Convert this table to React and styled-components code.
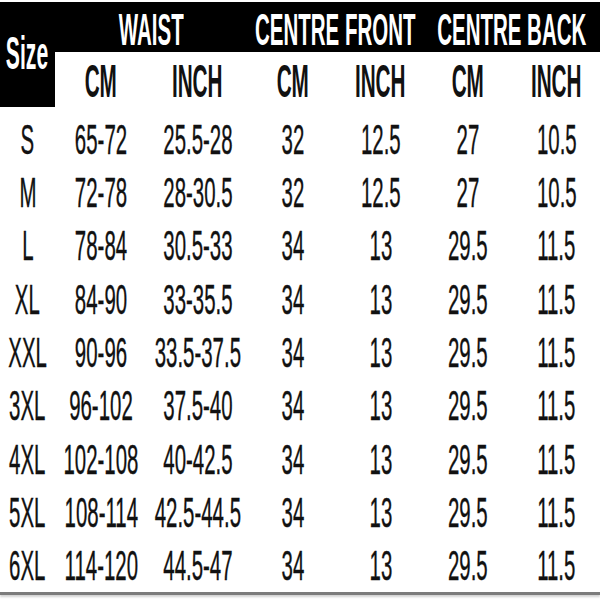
import styled, { createGlobalStyle } from 'styled-components'

const GlobalStyle = createGlobalStyle`
  html, body {
    margin: 0;
    padding: 0;
    background: #ffffff;
  }
  body {
    font-family: "Liberation Sans", Arial, sans-serif;
    color: #111111;
  }
`

const Page = styled.div`
  width: 600px;
  height: 600px;
  padding-top: 2px;
  box-sizing: border-box;
  overflow: hidden;
`

const Table = styled.div`
  display: grid;
  grid-template-columns: 55px 92px 101px 90px 85px 90px 87px;
  grid-template-rows: 50px 60px repeat(9, 53.33px);
  width: 600px;
  border-bottom: 3px solid #7c7c7c;
  box-shadow: 0 2px 2px rgba(0, 0, 0, 0.18);
`

const Cell = styled.div`
  display: flex;
  align-items: center;
  justify-content: center;
  min-width: 0;
  white-space: nowrap;
`

const SizeCell = styled(Cell)`
  grid-row: span 2;
  align-self: start;
  height: 105px;
  background: #000000;
  color: #ffffff;
  font-weight: 700;
  font-size: 46px;
  padding-bottom: 4px;
  box-sizing: border-box;
`

const GroupCell = styled(Cell)`
  grid-column: span 2;
  background: #000000;
  color: #ffffff;
  font-weight: 700;
  font-size: 45px;
  padding-top: 4px;
  box-sizing: border-box;
`

const UnitCell = styled(Cell)`
  font-weight: 700;
  font-size: 46px;
  padding-bottom: 3px;
  box-sizing: border-box;
`

const DataCell = styled(Cell)`
  font-size: 43px;
  padding-top: 1px;
  box-sizing: border-box;
  -webkit-text-stroke: 0.4px #111111;
`

const Squeeze = styled.span`
  display: inline-block;
  line-height: 1;
  transform: scaleX(${p => p.$sx || 0.475});
  transform-origin: center;
`

const rows = [
  ['S', '65-72', '25.5-28', '32', '12.5', '27', '10.5'],
  ['M', '72-78', '28-30.5', '32', '12.5', '27', '10.5'],
  ['L', '78-84', '30.5-33', '34', '13', '29.5', '11.5'],
  ['XL', '84-90', '33-35.5', '34', '13', '29.5', '11.5'],
  ['XXL', '90-96', '33.5-37.5', '34', '13', '29.5', '11.5'],
  ['3XL', '96-102', '37.5-40', '34', '13', '29.5', '11.5'],
  ['4XL', '102-108', '40-42.5', '34', '13', '29.5', '11.5'],
  ['5XL', '108-114', '42.5-44.5', '34', '13', '29.5', '11.5'],
  ['6XL', '114-120', '44.5-47', '34', '13', '29.5', '11.5'],
]

const groups = ['WAIST', 'CENTRE FRONT', 'CENTRE BACK']
const units = ['CM', 'INCH', 'CM', 'INCH', 'CM', 'INCH']

export default function App() {
  return (
    <>
      <GlobalStyle />
      <Page>
        <Table>
          <SizeCell>
            <Squeeze $sx={0.46}>Size</Squeeze>
          </SizeCell>
          {groups.map(g => (
            <GroupCell key={g}>
              <Squeeze $sx={0.455}>{g}</Squeeze>
            </GroupCell>
          ))}
          {units.map((u, i) => (
            <UnitCell key={i}>
              <Squeeze $sx={0.45}>{u}</Squeeze>
            </UnitCell>
          ))}
          {rows.map(row =>
            row.map((v, i) => (
              <DataCell key={row[0] + i}>
                <Squeeze>{v}</Squeeze>
              </DataCell>
            ))
          )}
        </Table>
      </Page>
    </>
  )
}
